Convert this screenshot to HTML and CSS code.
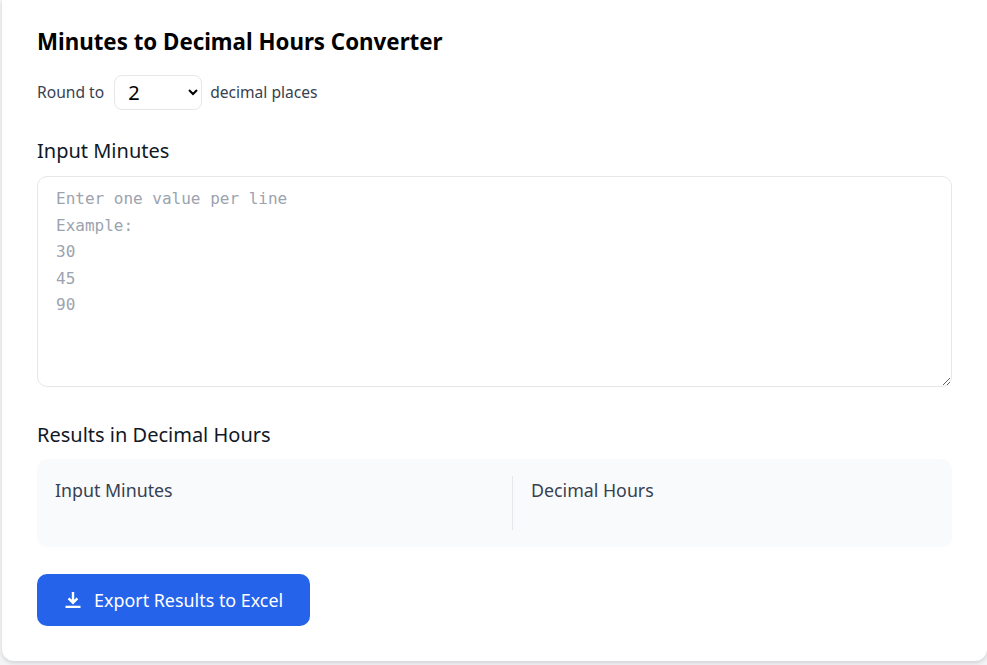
FILE: index.html
```html
<!DOCTYPE html>
<html lang="en">
<head>
<meta charset="utf-8">
<title>Minutes to Decimal Hours Converter</title>
<link rel="stylesheet" href="styles.css">
</head>
<body>
<main class="card">
  <h1 class="title">Minutes to Decimal Hours Converter</h1>
  <div class="round-row">
    <label class="round-label" for="places">Round to</label>
    <select class="round-select" id="places">
      <option>0</option><option>1</option><option selected>2</option><option>3</option><option>4</option>
    </select>
    <span class="round-label">decimal places</span>
  </div>
  <h2 class="section-title">Input Minutes</h2>
  <textarea class="minutes-input" placeholder="Enter one value per line&#10;Example:&#10;30&#10;45&#10;90"></textarea>
  <h2 class="section-title results-title">Results in Decimal Hours</h2>
  <div class="results">
    <div class="results-col">Input Minutes</div>
    <div class="results-col results-col-right">Decimal Hours</div>
  </div>
  <button class="export" type="button">
    <svg class="export-icon" viewBox="0 0 16 16" width="16" height="16" aria-hidden="true">
      <path d="M8 0V10.5M3.6 6.3L8 10.7L12.4 6.3M0.5 15H15.5" fill="none" stroke="currentColor" stroke-width="2.4"/>
    </svg>
    Export Results to Excel
  </button>
</main>
</body>
</html>
```
FILE: styles.css
```css
* { box-sizing: border-box; }
html, body { height: 100%; }
body {
  margin: 0;
  padding: 0 0 0 2px;
  background: #f3f4f6;
  font-family: "Noto Sans", "Open Sans", sans-serif;
  overflow: hidden;
}
.card {
  height: 661px;
  padding: 27px 35px 35px;
  background: #fff;
  border-radius: 0 0 12px 12px;
  box-shadow: 0 2px 4px rgba(0, 0, 0, .14);
  display: flex;
  flex-direction: column;
  align-items: stretch;
}
.title {
  margin: 0;
  font-size: 22.3px;
  line-height: 30px;
  font-weight: 700;
  color: #000;
}
.round-row {
  display: flex;
  align-items: center;
  gap: 10px;
  margin-top: 18px;
}
.round-label {
  padding-bottom: 2px;
  font-size: 15.6px;
  color: #374151;
}
.round-select {
  width: 88px;
  height: 35px;
  margin-right: -2px;
  padding: 0 9px;
  background: #fff;
  border: 1px solid #e5e7eb;
  border-radius: 8px;
  font-family: inherit;
  font-size: 20px;
  color: #000;
}
.section-title {
  margin: 27px 0 0;
  font-size: 20px;
  line-height: 28px;
  font-weight: 400;
  color: #111827;
}
.minutes-input {
  display: block;
  width: 100%;
  height: 211px;
  margin-top: 11px;
  padding: 9px 18px;
  border: 1px solid #e5e7eb;
  border-radius: 10px;
  font-family: "DejaVu Sans Mono", monospace;
  font-size: 16px;
  line-height: 26.6px;
  resize: vertical;
}
.minutes-input::placeholder { color: #9ca3af; opacity: 1; }
.results-title { margin-top: 34px; }
.results {
  display: grid;
  grid-template-columns: 475px 1fr;
  height: 88px;
  margin-top: 10px;
  padding: 17px 0;
  background: #f9fafb;
  border-radius: 10px;
}
.results-col {
  padding: 0 18px;
  font-size: 17.8px;
  line-height: 28px;
  color: #374151;
}
.results-col-right { border-left: 1px solid #e5e7eb; }
.export {
  display: flex;
  align-items: center;
  gap: 13px;
  align-self: flex-start;
  width: 273px;
  height: 52px;
  margin-top: 27px;
  padding: 0 0 0 28px;
  background: #2563eb;
  border: 0;
  border-radius: 10px;
  font-family: inherit;
  font-size: 17.9px;
  color: #fff;
}
.export-icon { flex: none; }
```
